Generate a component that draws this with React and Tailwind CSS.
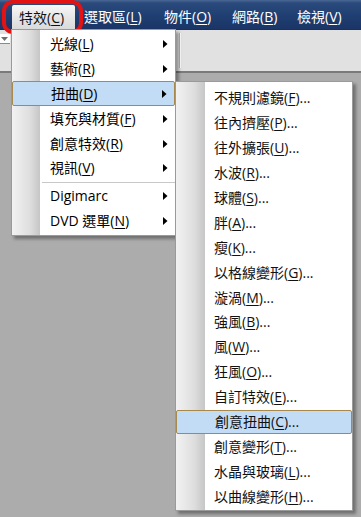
import React from "react";

const FONT = { fontFamily: '"Open Sans", "Noto Sans CJK TC", sans-serif' };

function Label({ pre, k, post = "" }) {
  return (
    <span className="whitespace-nowrap">
      {pre}(<span className="underline underline-offset-2 decoration-1">{k}</span>){post}
    </span>
  );
}

function Arrow() {
  return (
    <svg width="5" height="8" viewBox="0 0 5 8" className="shrink-0">
      <path d="M0 0 L4.5 4 L0 8 Z" fill="#000" />
    </svg>
  );
}

const mainItems = [
  { pre: "光線", k: "L" },
  { pre: "藝術", k: "R" },
  { pre: "扭曲", k: "D", hl: true },
  { pre: "填充與材質", k: "F" },
  { pre: "創意特效", k: "R" },
  { pre: "視訊", k: "V" },
  { sep: true },
  { plain: "Digimarc" },
  { pre: "DVD 選單", k: "N" },
];

const subItems = [
  ["不規則濾鏡", "F"],
  ["往內擠壓", "P"],
  ["往外擴張", "U"],
  ["水波", "R"],
  ["球體", "S"],
  ["胖", "A"],
  ["瘦", "K"],
  ["以格線變形", "G"],
  ["漩渦", "M"],
  ["強風", "B"],
  ["風", "W"],
  ["狂風", "O"],
  ["自訂特效", "E"],
  ["創意扭曲", "C", true],
  ["創意變形", "T"],
  ["水晶與玻璃", "L"],
  ["以曲線變形", "H"],
];

export default function App() {
  return (
    <div
      className="relative w-[361px] h-[517px] overflow-hidden bg-[#acacac] text-[14px] leading-none"
      style={FONT}
    >
      {/* menubar */}
      <div className="h-[30px] flex items-stretch bg-[linear-gradient(180deg,#4a6896_0px,#2b4a7c_3px,#203f72_15px,#1a3566_29px,#142c58_30px)] text-white">
        <div className="w-[12px]" />
        <div className="w-[66px] flex items-end pb-0">
          <div className="w-[63px] h-[25px] flex items-center pl-[7px] bg-[linear-gradient(180deg,#f7f7f7,#e6e6e6_50%,#d9d9d9)] text-[#111] rounded-t-[2px]">
            <Label pre="特效" k="C" />
          </div>
        </div>
        <div className="w-[80px] flex items-center pl-[6px] pt-[4px]">
          <Label pre="選取區" k="L" />
        </div>
        <div className="w-[68px] flex items-center pl-[6px] pt-[4px]">
          <Label pre="物件" k="O" />
        </div>
        <div className="w-[65px] flex items-center pl-[6px] pt-[4px]">
          <Label pre="網路" k="B" />
        </div>
        <div className="w-[64px] flex items-center pl-[6px] pt-[4px]">
          <Label pre="檢視" k="V" />
        </div>
      </div>

      {/* toolbar */}
      <div className="h-[43px] flex bg-[#e1e1e1] border-b-2 border-[#7a7a7a]">
        <div className="w-[10px] flex flex-col pt-[4px]">
          <div className="h-[10px] bg-white border-b border-[#8a8a8a] flex items-center pl-[1px]">
            <svg width="7" height="4" viewBox="0 0 7 4">
              <path d="M0 0 H7 L3.5 4 Z" fill="#707070" />
            </svg>
          </div>
        </div>
        <div className="w-[169px]" />
        <div className="mt-[3px] mb-[3px] w-[2px] border-l border-[#b4b4b4] bg-white" />
      </div>

      {/* annotation ring */}
      <div className="absolute left-[2px] top-[0px] w-[81px] h-[34px] rounded-[11px] border-[4px] border-[#e31313]" />

      {/* main dropdown */}
      <div className="absolute left-[11px] top-[29px] w-[165px] border border-[#9a9a9a] bg-[linear-gradient(90deg,#f2f2f2_0px,#dedede_18px,#c6c6c6_28px,#ffffff_28px)] shadow-[3px_3px_3px_rgba(0,0,0,0.35)] pt-[1.5px] pb-[1px] text-black">
        {mainItems.map((it, i) =>
          it.sep ? (
            <div key={i} className="h-[3px] flex items-center pl-[30px]">
              <div className="h-px w-full bg-[#c8c8c8]" />
            </div>
          ) : (
            <div
              key={i}
              className={
                "h-[24.9px] flex items-center justify-between pl-[38px] pr-[7px] " +
                (it.hl ? "bg-[#c3dcf6] border border-[#a7894e] rounded-[2px] pl-[37px] pr-[6px]" : "")
              }
            >
              {it.plain ? <span>{it.plain}</span> : <Label pre={it.pre} k={it.k} />}
              <Arrow />
            </div>
          )
        )}
      </div>

      {/* submenu */}
      <div className="absolute left-[175px] top-[81px] w-[178px] border border-[#9a9a9a] bg-[linear-gradient(90deg,#f2f2f2_0px,#dedede_18px,#c6c6c6_29px,#ffffff_29px)] shadow-[3px_3px_3px_rgba(0,0,0,0.35)] pt-[4px] pb-[1px] text-[#111]">
        {subItems.map(([pre, k, hl], i) => (
          <div
            key={i}
            className={
              "h-[24.9px] flex items-center pl-[38px] " +
              (hl ? "bg-[#c3dcf6] border border-[#a7894e] rounded-[2px] pl-[37px]" : "")
            }
          >
            <Label pre={pre} k={k} post="..." />
          </div>
        ))}
      </div>
    </div>
  );
}
